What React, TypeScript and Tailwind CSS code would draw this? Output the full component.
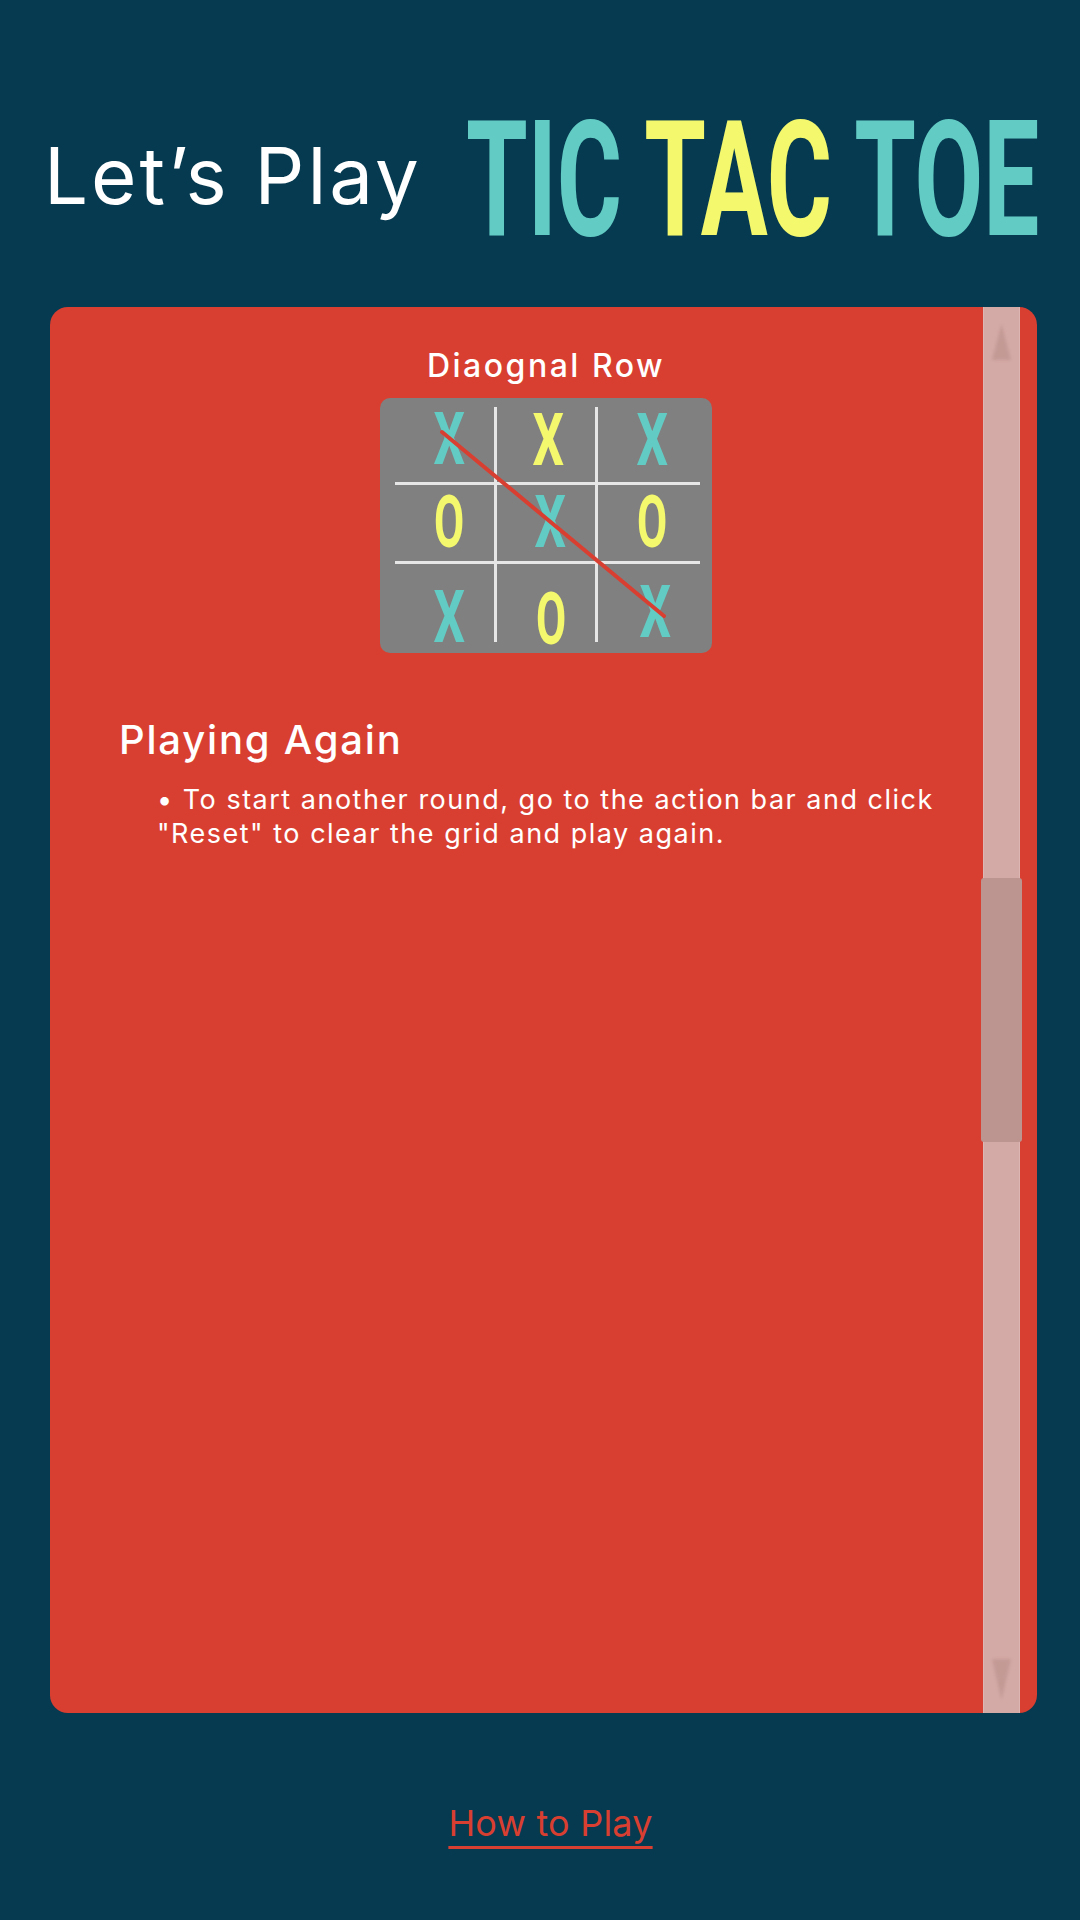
import React from "react";

type Cell = { ch: "X" | "O"; color: string; pad: string };

const cells: Cell[] = [
  { ch: "X", color: "text-[#62ccc4]", pad: "pt-[6px] pl-[10px]" },
  { ch: "X", color: "text-[#f4f86d]", pad: "pt-[7px] pl-[4px]" },
  { ch: "X", color: "text-[#62ccc4]", pad: "pt-[7px] pl-[6px]" },
  { ch: "O", color: "text-[#f4f86d]", pad: "pt-[11px] pl-[10px]" },
  { ch: "X", color: "text-[#62ccc4]", pad: "pt-[11px] pl-[8px]" },
  { ch: "O", color: "text-[#f4f86d]", pad: "pt-[11px] pl-[6px]" },
  { ch: "X", color: "text-[#62ccc4]", pad: "pt-[27px] pl-[10px]" },
  { ch: "O", color: "text-[#f4f86d]", pad: "pt-[29px] pl-[10px]" },
  { ch: "X", color: "text-[#62ccc4]", pad: "pt-[22px] pl-[12px]" },
];

const borders = [
  "border-r-[3px] border-b-[3px]",
  "border-r-[3px] border-b-[3px]",
  "border-b-[3px]",
  "border-r-[3px] border-b-[3px]",
  "border-r-[3px] border-b-[3px]",
  "border-b-[3px]",
  "border-r-[3px]",
  "border-r-[3px]",
  "",
];

const Board = () => {
  return (
    <div className="relative w-[332px] h-[255px] rounded-[10px] bg-[#808080] pl-[15px] pr-[12px] pt-[9px] pb-[11px]">
      <div className="grid grid-cols-3 grid-rows-3 w-full h-full">
        {cells.map((c, i) => (
          <div
            key={i}
            className={`flex justify-center items-start border-[#e6e6e6] ${borders[i]} ${c.pad}`}
          >
            <span
              className={`inline-block font-['Roboto'] font-bold text-[73px] leading-[52px] ${c.ch === "X" ? "scale-x-[0.68]" : "scale-x-[0.6]"} ${c.color}`}
            >
              {c.ch}
            </span>
          </div>
        ))}
      </div>
      <svg className="absolute inset-0" width="332" height="255" viewBox="0 0 332 255">
        <line x1="62" y1="34" x2="284" y2="218" stroke="#d93f31" strokeWidth="4" strokeLinecap="round" />
      </svg>
    </div>
  );
};

const Scrollbar = () => {
  return (
    <div className="w-[37px] mr-[17px] shrink-0 flex flex-col items-center bg-[#d4aaa6] border-x border-[#dcb6b2]">
      <svg className="mt-[15px] blur-[1.5px]" width="23" height="40" viewBox="0 0 23 40">
        <polygon points="11.5,2 21,38 2,38" fill="#bf9691" opacity="0.8" />
      </svg>
      <div className="mt-[516px] w-[41px] h-[264px] shrink-0 rounded-[3px] bg-[#bd9590] blur-[0.6px]" />
      <div className="flex-1" />
      <svg className="mb-[11px] blur-[1.5px]" width="23" height="45" viewBox="0 0 23 45">
        <polygon points="2,2 21,2 11.5,43" fill="#bf9691" opacity="0.8" />
      </svg>
    </div>
  );
};

export default function App() {
  return (
    <div className="w-[1080px] h-[1920px] overflow-hidden bg-[#063a50] flex flex-col">
      <header className="h-[307px] shrink-0 pt-[45px] flex items-center justify-between pl-[44px] pr-[45px]">
        <h2 className="font-['Inter'] font-normal text-[78px] leading-none tracking-[3px] text-white whitespace-nowrap">
          Let’s Play
        </h2>
        <h1 className="w-[569px] h-[117px] mt-[8px]">
          <span className="inline-block origin-left scale-x-[0.615] whitespace-nowrap font-['Roboto'] font-bold text-[162px] leading-[117px]">
            <span className="text-[#62ccc4]">TIC</span>{" "}
            <span className="text-[#f4f86d]">TAC</span>{" "}
            <span className="text-[#62ccc4]">TOE</span>
          </span>
        </h1>
      </header>

      <main className="ml-[50px] w-[987px] h-[1406px] shrink-0 rounded-[18px] overflow-hidden bg-[#d93f31] flex">
        <div className="flex-1 flex flex-col">
          <div className="pl-[59px] pt-[41px] flex flex-col items-center">
            <h3 className="font-['Inter'] font-medium text-[32px] leading-[36px] tracking-[2.5px] text-white">
              Diaognal Row
            </h3>
            <div className="mt-[14px]">
              <Board />
            </div>
          </div>
          <div className="pl-[69px] mt-[65px]">
            <h2 className="font-['Inter'] font-medium text-[40px] leading-[44px] tracking-[1.8px] text-white">
              Playing Again
            </h2>
            <p className="mt-[21px] ml-[38px] font-['Inter'] font-normal text-[27px] leading-[34px] tracking-[1.5px] text-white whitespace-nowrap">
              • To start another round, go to the action bar and click
              <br />
              "Reset" to clear the grid and play again.
            </p>
          </div>
        </div>
        <Scrollbar />
      </main>

      <footer className="flex-1 flex justify-center pl-[21px] pt-[88px]">
        <a className="font-['Inter'] font-normal text-[36px] leading-[44px] tracking-[0.2px] text-[#d93f31] underline decoration-[3px] underline-offset-[10px] [text-decoration-skip-ink:none]">
          How to Play
        </a>
      </footer>
    </div>
  );
}
